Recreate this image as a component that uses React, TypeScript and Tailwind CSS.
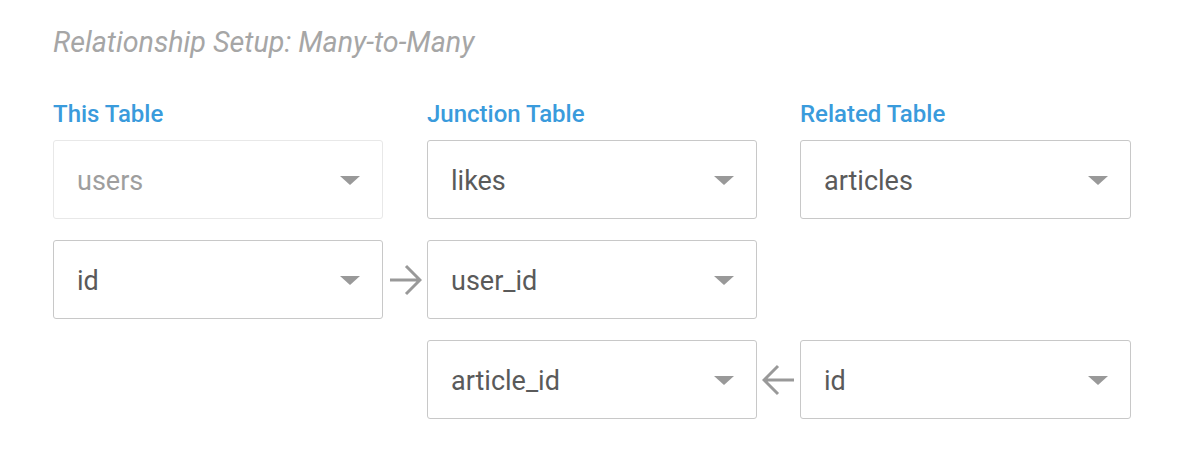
import React from "react";

const Caret = () => (
  <span className="w-0 h-0 mt-[2px] border-l-[10px] border-r-[10px] border-t-[9px] border-l-transparent border-r-transparent border-t-[#999]" />
);

const Select = ({ value, disabled = false }: { value: string; disabled?: boolean }) => (
  <div
    className={
      disabled
        ? "h-[79px] flex items-center justify-between pl-[23px] pr-[22px] rounded-[3px] border border-[#e8e8e8] text-[#9e9e9e] text-[27px]"
        : "h-[79px] flex items-center justify-between pl-[23px] pr-[22px] rounded-[3px] border border-[#c8c8c8] text-[#5a5a5a] text-[27px]"
    }
  >
    <span className="mt-[4px]">{value}</span>
    <Caret />
  </div>
);

const Arrow = ({ left = false }: { left?: boolean }) => (
  <div className="flex items-center justify-center">
    <svg width="33" height="32" viewBox="0 0 33 32" className={left ? "rotate-180" : ""}>
      <path d="M1 16 H31 M17 2 L31 16 L17 30" fill="none" stroke="#999" strokeWidth="3" />
    </svg>
  </div>
);

const Label = ({ children }: { children: React.ReactNode }) => (
  <div className="text-[24px] font-medium text-[#3a9bdc] leading-none pb-[14px]">{children}</div>
);

export default function App() {
  return (
    <div className="w-[1190px] h-[460px] bg-white pl-[53px] pt-[28px]" style={{ fontFamily: "Roboto, sans-serif" }}>
      <h2 className="text-[28.7px] italic font-normal text-[#a6a6a6] leading-[28px]">Relationship Setup: Many-to-Many</h2>

      <div className="mt-[46px] grid grid-cols-[330px_44px_330px_43px_331px] gap-y-[21px]">
        {/* labels + table pickers */}
        <div>
          <Label>This Table</Label>
          <Select value="users" disabled />
        </div>
        <div />
        <div>
          <Label>Junction Table</Label>
          <Select value="likes" />
        </div>
        <div />
        <div>
          <Label>Related Table</Label>
          <Select value="articles" />
        </div>

        {/* source key */}
        <Select value="id" />
        <Arrow />
        <Select value="user_id" />
        <div />
        <div />

        {/* target key */}
        <div />
        <div />
        <Select value="article_id" />
        <Arrow left />
        <Select value="id" />
      </div>
    </div>
  );
}
